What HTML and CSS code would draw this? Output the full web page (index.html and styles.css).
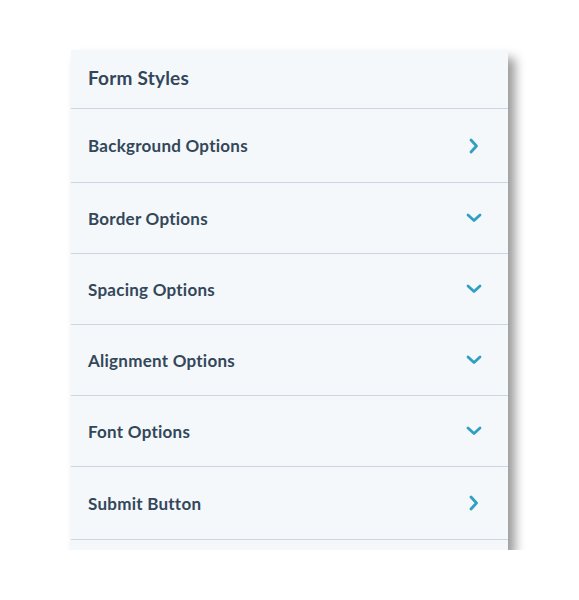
FILE: index.html
```html
<!DOCTYPE html>
<html lang="en">
<head>
<meta charset="utf-8">
<title>Form Styles</title>
<link rel="stylesheet" href="styles.css">
</head>
<body>
<div class="panel">
  <div class="panel-header">Form Styles</div>
  <div class="row row-first">
    <span class="label">Background Options</span>
    <svg class="chev" width="16" height="16" viewBox="0 0 16 16"><path d="M5 2 L10.5 8 L5 14" fill="none" stroke="currentColor" stroke-width="2.8" stroke-linecap="round" stroke-linejoin="round"/></svg>
  </div>
  <div class="row">
    <span class="label">Border Options</span>
    <svg class="chev" width="16" height="16" viewBox="0 0 16 16"><path d="M2 5 L8 10.5 L14 5" fill="none" stroke="currentColor" stroke-width="2.8" stroke-linecap="round" stroke-linejoin="round"/></svg>
  </div>
  <div class="row">
    <span class="label">Spacing Options</span>
    <svg class="chev" width="16" height="16" viewBox="0 0 16 16"><path d="M2 5 L8 10.5 L14 5" fill="none" stroke="currentColor" stroke-width="2.8" stroke-linecap="round" stroke-linejoin="round"/></svg>
  </div>
  <div class="row">
    <span class="label">Alignment Options</span>
    <svg class="chev" width="16" height="16" viewBox="0 0 16 16"><path d="M2 5 L8 10.5 L14 5" fill="none" stroke="currentColor" stroke-width="2.8" stroke-linecap="round" stroke-linejoin="round"/></svg>
  </div>
  <div class="row">
    <span class="label">Font Options</span>
    <svg class="chev" width="16" height="16" viewBox="0 0 16 16"><path d="M2 5 L8 10.5 L14 5" fill="none" stroke="currentColor" stroke-width="2.8" stroke-linecap="round" stroke-linejoin="round"/></svg>
  </div>
  <div class="row row-last">
    <span class="label">Submit Button</span>
    <svg class="chev" width="16" height="16" viewBox="0 0 16 16"><path d="M5 2 L10.5 8 L5 14" fill="none" stroke="currentColor" stroke-width="2.8" stroke-linecap="round" stroke-linejoin="round"/></svg>
  </div>
  <div class="panel-foot"></div>
</div>
</body>
</html>
```

FILE: styles.css
```css
html, body {
  margin: 0;
  padding: 0;
  background: #ffffff;
}

body {
  font-family: Lato, "Open Sans", "Liberation Sans", sans-serif;
  color: #33475b;
  padding: 50px 0 0 71px;
}

.panel {
  width: 437px;
  background: #f5f8fa;
  box-shadow: 7px 8px 10px rgba(0, 0, 0, 0.4);
}

.panel-header {
  height: 54px;
  padding-bottom: 4px;
  border-bottom: 1px solid #cbd6e2;
  display: flex;
  align-items: center;
  padding-left: 17px;
  font-size: 19px;
  font-weight: 700;
  letter-spacing: 0.2px;
}

.row {
  height: 70px;
  border-bottom: 1px solid #cbd6e2;
  display: flex;
  align-items: center;
  justify-content: space-between;
  padding: 0 26px 0 17px;
}

.row-first {
  height: 73px;
}

.row-last {
  height: 72px;
}

.label {
  font-size: 17px;
  font-weight: 700;
  letter-spacing: 0.25px;
}

.chev {
  color: #2f9fc2;
  display: block;
}

.panel-foot {
  height: 10px;
}
```
